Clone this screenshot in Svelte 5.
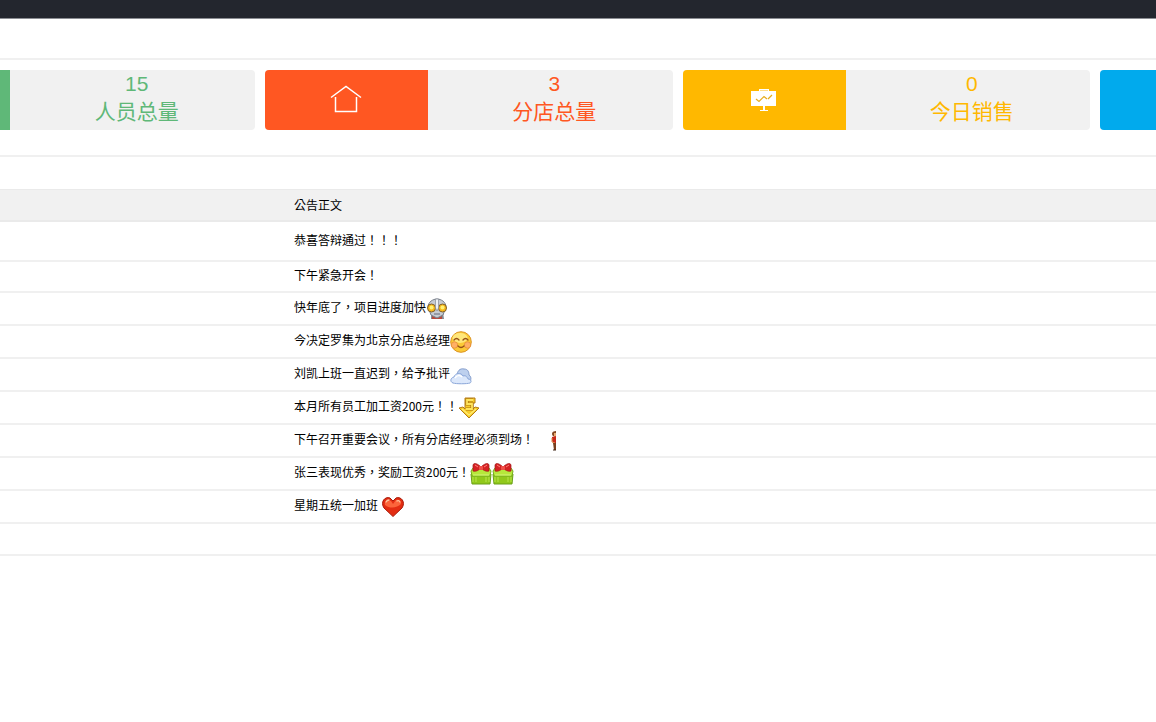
<script>
  /**
   * @typedef {{ label: string, value: number, color: string, icon: string }} Stat
   * @typedef {{ text: string, icons?: string[], tall?: boolean, spaced?: boolean }} Notice
   */

  /** @type {Stat[]} */
  const stats = [
    { label: '人员总量', value: 15, color: 'green', icon: '' },
    { label: '分店总量', value: 3, color: 'orange', icon: 'home' },
    { label: '今日销售', value: 0, color: 'yellow', icon: 'board' },
    { label: '', value: null, color: 'blue', icon: '' }
  ];

  /** @type {Notice[]} */
  const notices = [
    { text: '恭喜答辩通过\uff01\uff01\uff01', tall: true },
    { text: '下午紧急开会\uff01' },
    { text: '快年底了\uff0c项目进度加快', icons: ['robot'] },
    { text: '今决定罗集为北京分店总经理', icons: ['smile'] },
    { text: '刘凯上班一直迟到\uff0c给予批评', icons: ['cloud'] },
    { text: '本月所有员工加工资200元\uff01\uff01', icons: ['five'] },
    { text: '下午召开重要会议\uff0c所有分店经理必须到场\uff01', icons: ['person'], spaced: true },
    { text: '张三表现优秀\uff0c奖励工资200元\uff01', icons: ['gift', 'gift'] },
    { text: '星期五统一加班', icons: ['heart'], spaced: true }
  ];
</script>

{#snippet emote(name)}
  <svg class="emote" width="22" height="22" viewBox="0 0 22 22" fill="none" aria-hidden="true">
    {#if name === 'robot'}
      <path d="M5 14h12l1 7H5z" fill="#858b95"/>
      <path d="M6 18l5 2 5-2v3H6z" fill="#b9493b"/>
      <path d="M2 9C2 4 7 1 11 1s9 3 9 8l-3 8-6 3-6-3z" fill="#c6cbd2" stroke="#777e88"/>
      <circle cx="5.5" cy="10" r="4" fill="#f7b91b" stroke="#81602b"/>
      <circle cx="16.5" cy="10" r="4" fill="#f7b91b" stroke="#81602b"/>
      <circle cx="5.5" cy="9.5" r="2" fill="#fff176"/>
      <circle cx="16.5" cy="9.5" r="2" fill="#fff176"/>
      <path d="M9.5 1h3v9L11 13l-1.500-3z" fill="#edf0f3" stroke="#858b95" stroke-width=".7"/>
      <path d="M8 16h6" stroke="#646b76"/>
    {:else if name === 'smile'}
      <circle cx="11" cy="11" r="10.3" fill="#fbc936" stroke="#dc9422"/>
      <ellipse cx="10" cy="7" rx="7.5" ry="5" fill="#ffe77b"/>
      <circle cx="4.5" cy="14" r="3.2" fill="#ffb064" stroke="#e58b35" stroke-width=".7"/>
      <circle cx="17.5" cy="14" r="3.2" fill="#ffb064" stroke="#e58b35" stroke-width=".7"/>
      <path d="M4 9q2.5-3 5 0M13 9q2.5-3 5 0M8 15q3 3 6 0" stroke="#965119" stroke-width="1.3" stroke-linecap="round"/>
    {:else if name === 'cloud'}
      <path d="M7 12c0-5 3-8 7-7 4 0 5 3 5 6 3 2 2 6 0 7H8z" fill="#bdd0ee" stroke="#849dcc"/>
      <path d="M3 19c-3-1-3-5 1-6 1-4 7-5 9-1 3-1 4 1 5 3 3 0 4 3 2 4-3 1-14 1-17 0z" fill="#dce8fb" stroke="#8ba7d9"/>
      <path d="M5 14c2-3 5-3 7-1" stroke="#fff" stroke-width="1.5"/>
    {:else if name === 'five'}
      <path d="M1 11l4-1 2 2V1h10v5h-2v6l2-2 4 1-10 10z" fill="#f8cd28" stroke="#b47b16" stroke-linejoin="round"/>
      <path d="M15 3H9v4h5v5H8" stroke="#a8700f" stroke-width="3"/>
      <path d="M15 3H9v4h5v5H8" stroke="#ffe45d" stroke-width="1.8"/>
      <path d="M4 12l7 6 7-6" stroke="#ffec76" stroke-width="1.2"/>
    {:else if name === 'person'}
      <path d="M18 1c-4 0-5 3-3 5l3 1z" fill="#824723"/>
      <path d="M16 3h2v4h-2z" fill="#e7ac72"/>
      <path d="M14 7l4-1v8h-2l-2-3z" fill="#c8291b"/>
      <path d="M14 8v4l3 1" stroke="#dd8b4c"/>
      <path d="M15 13h3v7h-2z" fill="#78401e"/>
      <path d="M15 20h3" stroke="#402717"/>
    {:else if name === 'gift'}
      <path d="M1 11h20l-1 10H2z" fill="#91c91b" stroke="#6a9f18"/>
      <path d="M1 8l2-3h16l2 3-1 5H2z" fill="#b6e83b" stroke="#78ae20"/>
      <path d="M3 14v5M6 14v5M16 14v5M19 14v5" stroke="#b8e64c"/>
      <path d="M3 12h16" stroke="#d5f77a"/>
      <path d="M11 4C8 1 4-1 3 2v6c3 1 6-1 8-3 2 2 5 4 8 3V2c-1-3-5-1-8 2z" fill="#d52224" stroke="#9f1717" stroke-width=".7"/>
      <rect x="9" y="3" width="4" height="4" rx="1" fill="#f0504a"/>
      <path d="M5 2l3 2M17 2l-3 2" stroke="#ff8077"/>
    {:else if name === 'heart'}
      <path d="M11 20.500L2 12C-2 6 3 0 8 2l3 3 3-3c5-2 10 4 6 10z" fill="#e32d12" stroke="#a91d0c"/>
      <path d="M3 9c-1-4 3-6 6-4l2 3 3-4c3-1 5 1 5 4-4 4-11 5-16 1z" fill="#fb653b"/>
      <path d="M4 6q1-2 3-2M15 5q2-1 3 1" stroke="#ffc69f" stroke-width="1.3" stroke-linecap="round"/>
    {/if}
  </svg>
{/snippet}

<header class="topbar"></header>

<main>
  <div class="strip strip-top"></div>

  <section class="stats">
    {#each stats as stat}
      <div class="stat {stat.color}">
        <div class="stat-icon">
          {#if stat.icon === 'home'}
            <svg width="32" height="30" viewBox="0 0 32 30" fill="none" stroke="#fff" stroke-width="1.5" aria-hidden="true">
              <path d="M1 12.500L16 1.500l15 11M5.500 12v14.500h21V12"/>
            </svg>
          {:else if stat.icon === 'board'}
            <svg width="26" height="24" viewBox="0 0 26 24" fill="none" aria-hidden="true">
              <path d="M8 1h10v2h7v15H14v4h3v1H9v-1h3v-4H0V3h8z" fill="#fff"/>
              <path d="M9 2.500h8" stroke="#ffdf8c"/>
              <path d="M5 11l3 2.500 5-5 3 2.500M17 11l4-4" stroke="#e7ac1b" stroke-width="1.2"/>
            </svg>
          {/if}
        </div>
        <div class="stat-info">
          <p>{stat.value}</p>
          <p>{stat.label}</p>
        </div>
      </div>
    {/each}
  </section>

  <div class="strip"></div>

  <table class="notices">
    <thead>
      <tr>
        <td class="lead"></td>
        <th scope="col">公告正文</th>
      </tr>
    </thead>
    <tbody>
      {#each notices as notice}
        <tr class:tall={notice.tall}>
          <td class="lead"></td>
          <td>
            <div class="notice" class:spaced={notice.spaced}>
              <span class="text">{notice.text}</span>
              {#if notice.icons}
                <span class="emotes">
                  {#each notice.icons as icon}
                    {@render emote(icon)}
                  {/each}
                </span>
              {/if}
            </div>
          </td>
        </tr>
      {/each}
    </tbody>
  </table>

  <div class="strip strip-end"></div>
</main>

<style>
  :global(body) {
    background: #fff;
    color: #000;
    font-family: "Liberation Sans", "Noto Sans CJK SC", sans-serif;
  }

  .topbar {
    height: 18px;
    background: #23262e;
    border-bottom: 1px solid #8b8d93;
  }

  main {
    overflow: hidden;
  }

  .strip {
    height: 32px;
  }

  .strip-top {
    height: 39px;
    border-bottom: 2px solid #f0f0f0;
  }

  .strip-end {
    height: 30px;
    border-bottom: 2px solid #f0f0f0;
  }

  /* the row of cards starts left of the viewport and runs past its right edge */
  .stats {
    display: grid;
    grid-template-columns: repeat(4, calc(36.12vw - 10px));
    gap: 10px;
    margin-left: -13.2vw;
    padding: 10px 0 25px;
    border-bottom: 2px solid #f0f0f0;
  }

  .stat {
    display: flex;
    height: 60px;
    background: #f1f1f1;
    border-radius: 4px;
    overflow: hidden;
  }

  .stat-icon {
    flex: 0 0 40%;
    display: flex;
    align-items: center;
    justify-content: center;
    background: currentColor;
  }

  .stat-info {
    flex: 1;
    padding-left: 8px;
    text-align: center;
    font-size: 21px;
    line-height: 28px;
  }

  .stat-info p {
    margin: 0;
  }

  .green { color: #5fb878; }
  .orange { color: #ff5722; }
  .yellow { color: #ffb800; }
  .blue { color: #01aaed; }

  .notices {
    width: 100%;
    table-layout: fixed;
    border-collapse: separate;
    border-spacing: 0;
    font-family: "Noto Sans CJK TC", "Noto Sans CJK SC", sans-serif;
    font-size: 12px;
    line-height: 20px;
  }

  th,
  td {
    height: 29px;
    padding: 0 15px;
    border-bottom: 2px solid #f0f0f0;
    font-weight: 400;
    text-align: left;
  }

  thead th,
  thead td {
    height: 30px;
    background: #f1f1f1;
    border-top: 1px solid #eaeaea;
    border-bottom-color: #eaeaea;
  }

  .lead {
    width: 249px;
  }

  .tall td {
    height: 38px;
  }

  .notice {
    display: flex;
    align-items: center;
  }

  .spaced {
    gap: 4px;
  }

  .text {
    padding-bottom: 3px;
  }

  .emotes {
    display: flex;
    padding: 5px 0 4px;
  }

  .emote {
    display: block;
  }
</style>
